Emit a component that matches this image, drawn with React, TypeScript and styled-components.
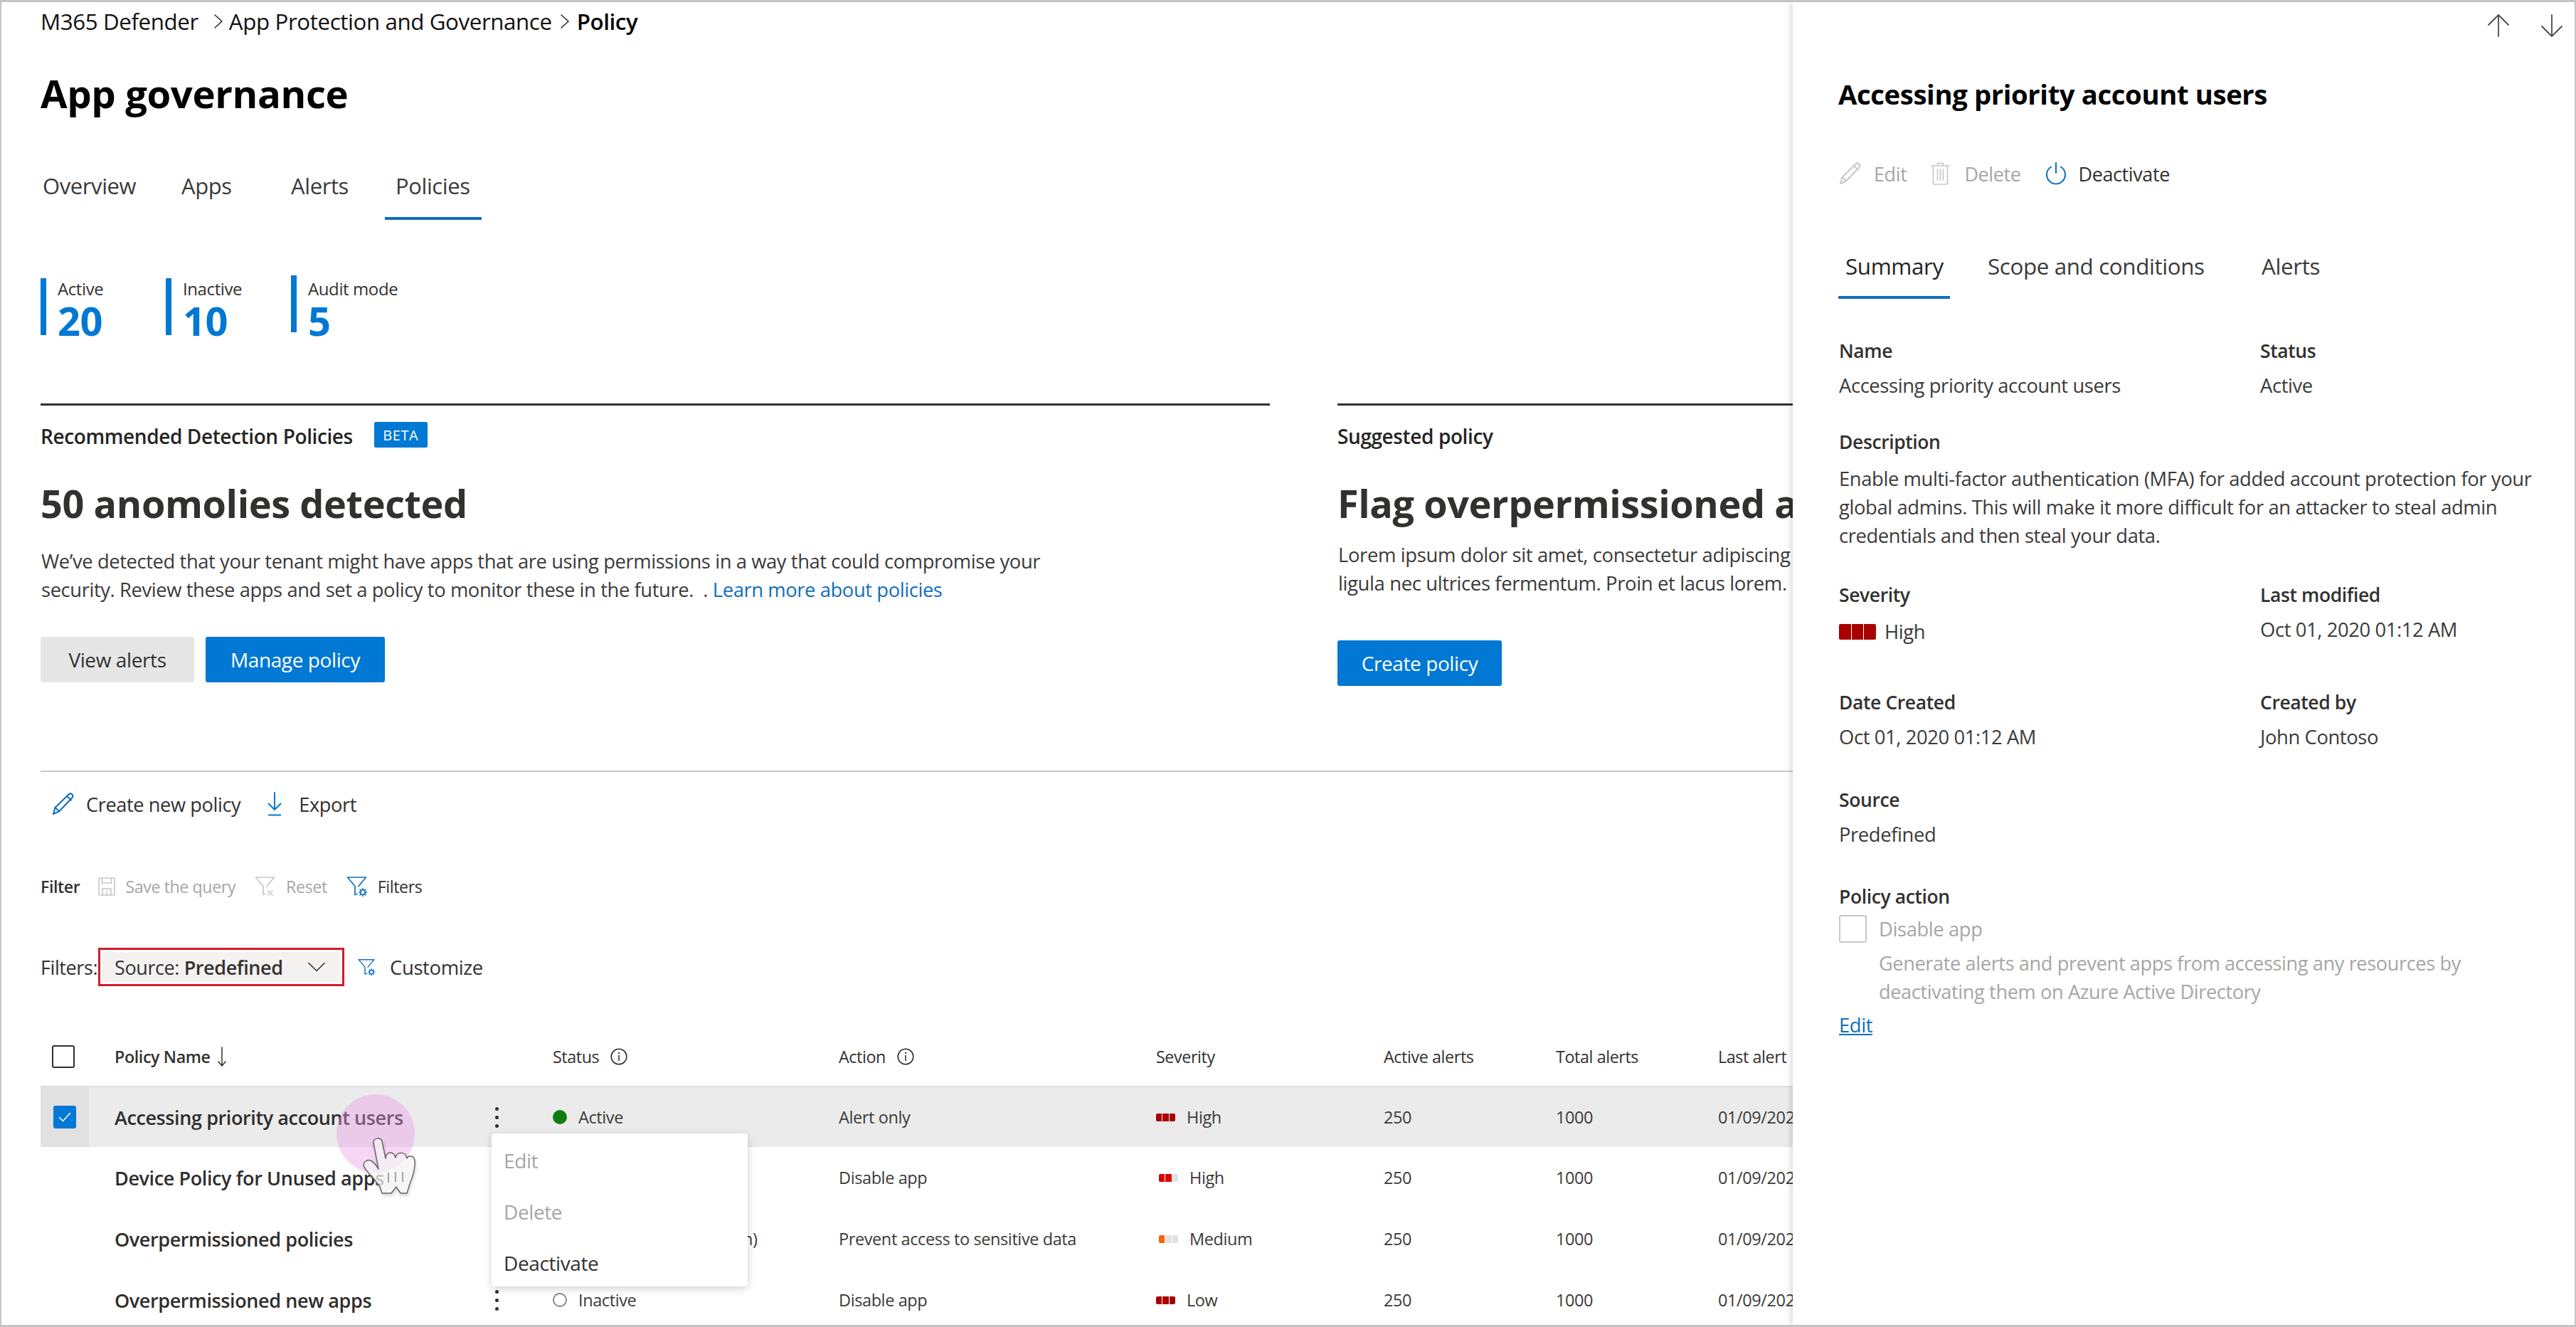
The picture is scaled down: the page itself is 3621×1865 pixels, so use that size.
import React from "react";
import styled, { createGlobalStyle } from "styled-components";

const Global = createGlobalStyle`
  html, body { margin: 0; padding: 0; background: #fff; }
  * { box-sizing: border-box; }
  body { font-family: "Open Sans", "Noto Sans", "Liberation Sans", sans-serif; color: #323130; letter-spacing: -0.025em; }
`;

const BLUE = "#0078d4";

const Frame = styled.div`
  width: 3621px; height: 1865px; display: flex; overflow: hidden; background: #fff;
  border-top: 3px solid #c4c4c4; border-left: 2px solid #c4c4c4; border-right: 2px solid #c4c4c4; border-bottom: 3px solid #c4c4c4;
`;
const Main = styled.main`
  flex: 0 0 2518px; width: 2518px; overflow: hidden; padding-left: 55px; white-space: nowrap;
`;
const Breadcrumb = styled.nav`
  height: 54px; display: flex; align-items: center; font-size: 31.300px; color: #111;
`;
const Crumb = styled.span<{ $bold?: boolean }>`
  font-weight: ${p => (p.$bold ? 600 : 400)};
  color: ${p => (p.$bold ? "#000" : "#111")};
`;
const CrumbSep = styled.svg<{ $near?: boolean }>`
  width: 12px; height: 24px; margin: 0 ${p => (p.$near ? 11 : 9)}px 0 ${p => (p.$near ? 12 : 22)}px; flex: none;
`;
const Title = styled.h1`
  margin: 43px 0 0; height: 62px; line-height: 62px; font-size: 54.500px; font-weight: 700; color: #000;
`;
const Tabs = styled.div`
  margin: 77px 0 0 -12px; display: grid; grid-template-columns: 195px 154px 147px 136px;
`;
const TabItem = styled.div<{ $active?: boolean }>`
  height: 70px; padding: 0 15px; line-height: 44px; font-size: 31px; color: #3b3a39;
  border-bottom: 4px solid ${p => (p.$active ? "#106ebe" : "transparent")};
`;
const Stats = styled.div`
  margin-top: 82px; display: flex; height: 176px;
`;
const Stat = styled.div`
  width: 176px; display: flex; align-items: flex-start; gap: 16px;
`;
const StatBar = styled.div<{ $raised?: boolean }>`
  width: 8px; height: 80px; background: ${BLUE}; margin-top: ${p => (p.$raised ? -4 : 0)}px;
`;
const StatText = styled.div`display: flex; flex-direction: column;`;
const StatLabel = styled.div`
  font-size: 24px; line-height: 30px; color: #323130;
`;
const StatValue = styled.div`
  font-size: 56px; line-height: 58px; font-weight: 700; color: ${BLUE}; letter-spacing: -0.01em;
`;
const Cards = styled.section`
  height: 516px; display: grid; grid-template-columns: 1728px 1000px; column-gap: 95px;
`;
const Card = styled.div`
  border-top: 3px solid #323130;
`;
const CardHead = styled.div`
  margin-top: 23px; height: 36px; display: flex; align-items: center; gap: 30px;
  font-size: 28px; font-weight: 600; color: #252423;
`;
const CardHeadText = styled.span`padding-top: 3px;`;
const Beta = styled.span`
  width: 75px; height: 36px; display: flex; align-items: center; justify-content: center;
  background: ${BLUE}; color: #fff; font-size: 20px; font-weight: 400; letter-spacing: 0.03em; border-radius: 2px;
`;
const CardTitle = styled.h2`
  margin: 46px 0 0; height: 64px; line-height: 64px; font-size: 54px; font-weight: 700; color: #323130;
`;
const CardText = styled.p<{ $tight?: boolean }>`
  margin: ${p => (p.$tight ? 21 : 30)}px 0 0; padding-left: 1px; font-size: ${p => (p.$tight ? 27.500 : 27.350)}px; line-height: 40px; color: #3b3a39;
`;
const TextLink = styled.a`color: #106ebe;`;
const Actions = styled.div<{ $gap: number }>`
  margin-top: ${p => p.$gap}px; display: flex; gap: 16px;
`;
const Btn = styled.div<{ $primary?: boolean; $w: number }>`
  width: ${p => p.$w}px; height: 64px; display: flex; align-items: center; justify-content: center;
  background: ${p => (p.$primary ? BLUE : "#e6e6e6")}; color: ${p => (p.$primary ? "#fff" : "#323130")};
  border-radius: 3px; font-size: 28px;
`;
const Divider = styled.div`height: 2px; background: #c8c8c8;`;
const Toolbar = styled.div`
  height: 90px; display: flex; align-items: center; padding-left: 16px; font-size: 27.200px; color: #323130;
`;
const ToolItem = styled.span<{ $gap?: number; $after?: number }>`
  display: flex; align-items: center; gap: ${p => p.$gap ?? 16}px; margin-right: ${p => p.$after ?? 0}px;
`;
const FilterRow = styled.div`
  margin-top: 46px; height: 50px; display: flex; align-items: center; font-size: 23.200px; color: #323130;
`;
const FilterLabel = styled.span`font-weight: 600; margin-right: 26px;`;
const FilterItem = styled.span<{ $off?: boolean; $after?: number }>`
  display: flex; align-items: center; gap: 14px; margin-right: ${p => p.$after ?? 0}px;
  color: ${p => (p.$off ? "#a6a6a6" : "#323130")};
`;
const ChipRow = styled.div`
  margin-top: 61px; height: 54px; display: flex; align-items: center; font-size: 27px;
`;
const ChipLabel = styled.span`width: 81px;`;
const Chip = styled.div`
  width: 346px; height: 54px; border: 3px solid #d01c2c; padding: 3px; background: #fff;
  margin-right: 19px; display: flex;
`;
const ChipInner = styled.div`
  flex: 1; background: #f3f2f1; display: flex; align-items: center; justify-content: space-between;
  padding: 0 21px 0 17px; font-size: 27px; color: #323130;
`;
const ChipBold = styled.b`font-weight: 600;`;
const Customize = styled.span`
  display: flex; align-items: center; gap: 20px; font-size: 27.500px;
`;
const Table = styled.div`
  margin-top: 57px; position: relative;
`;
const grid = "68px 652px 402px 446px 320px 242px 228px 200px";
const HeadRow = styled.div`
  height: 83px; display: grid; grid-template-columns: ${grid}; align-items: center; font-size: 23.300px; color: #323130;
`;
const HeadCell = styled.div`display: flex; align-items: center; gap: 16px;`;
const NameHead = styled(HeadCell)`padding-left: 36px; font-weight: 600; gap: 10px;`;
const CheckCell = styled.div`display: flex; padding-left: 16px;`;
const Box = styled.div`
  width: 32px; height: 32px; border: 2px solid #323130; border-radius: 3px;
`;
const CheckedBox = styled.div`
  width: 32px; height: 32px; margin-left: 2px; background: ${BLUE}; border-radius: 3px;
  display: flex; align-items: center; justify-content: center;
`;
const Row = styled.div<{ $selected?: boolean }>`
  height: 86px; display: grid; grid-template-columns: ${grid}; align-items: stretch;
  font-size: 23.500px; color: #3b3a39;
  background: ${p => (p.$selected ? "#ebebeb" : "transparent")};
  border-top: ${p => (p.$selected ? "2px solid #dedede" : "none")};
`;
const Cell = styled.div`display: flex; align-items: center; gap: 16px;`;
const SelCell = styled.div<{ $selected?: boolean }>`
  display: flex; align-items: center; padding-left: 16px;
  background: ${p => (p.$selected ? "#e1e1e1" : "transparent")};
`;
const NameCell = styled.div`
  padding-left: 36px; display: flex; align-items: center; justify-content: space-between; padding-right: 76px;
  font-size: 27px; font-weight: 600; color: #2f2e2d;
`;
const More = styled.div`display: flex; flex-direction: column; gap: 7px;`;
const MoreDot = styled.i`display: block; width: 5px; height: 5px; border-radius: 50%; background: #323130;`;
const StatusDot = styled.span<{ $on?: boolean }>`
  width: 20px; height: 20px; border-radius: 50%; flex: none;
  background: ${p => (p.$on ? "#107c10" : "#fff")};
  border: ${p => (p.$on ? "none" : "2px solid #8a8886")};
`;
const Sev = styled.div<{ $big?: boolean; $indent?: number }>`
  display: flex; gap: 1px; margin-left: ${p => p.$indent ?? 0}px;
  width: ${p => (p.$big ? 52 : 27)}px; height: ${p => (p.$big ? 22 : 11)}px; flex: none;
  border-radius: 2px; overflow: hidden;
`;
const SevBar = styled.i<{ $c: string }>`flex: 1; background: ${p => p.$c};`;
const Menu = styled.div`
  position: absolute; left: 634px; top: 150px; width: 360px; height: 215px; background: #fff; border-radius: 4px;
  box-shadow: 0 3px 12px rgba(0,0,0,.18); padding: 2px 17px 0; font-size: 28px; z-index: 2;
`;
const MenuItem = styled.div<{ $off?: boolean }>`
  height: 72px; display: flex; align-items: center; color: ${p => (p.$off ? "#a6a6a6" : "#323130")};
`;
const Halo = styled.div`
  position: absolute; left: 416px; top: 95px; width: 110px; height: 110px; border-radius: 50%;
  background: rgba(236,150,230,.4); z-index: 3;
`;
const Hand = styled.svg`
  position: absolute; left: 453px; top: 155px; width: 76px; height: 82px; z-index: 4;
  filter: drop-shadow(1px 3px 2px rgba(0,0,0,.18));
`;

const Panel = styled.aside`
  flex: 1; position: relative; background: #fff; box-shadow: -3px 0 7px rgba(0,0,0,.14);
  padding-left: 65px; white-space: nowrap; z-index: 5;
`;
const PagerRow = styled.div`
  height: 65px; display: flex; justify-content: flex-end; align-items: center; gap: 45px; padding-right: 17px;
`;
const PanelTitle = styled.h2`
  margin: 39px 0 0 -1px; height: 50px; line-height: 50px; font-size: 38.300px; font-weight: 700; color: #000;
`;
const PanelActions = styled.div`
  margin: 59px 0 0 0; height: 56px; display: flex; align-items: center; font-size: 27px;
`;
const PanelAction = styled.span<{ $off?: boolean; $after?: number; $gap?: number }>`
  display: flex; align-items: center; gap: ${p => p.$gap ?? 17}px; margin-right: ${p => p.$after ?? 0}px;
  color: ${p => (p.$off ? "#a6a6a6" : "#323130")};
`;
const PanelTabs = styled.div`
  margin: 80px 0 0 -1px; display: grid; grid-template-columns: 210px 385px 160px;
`;
const PanelTab = styled.div<{ $active?: boolean }>`
  height: 68px; padding-left: ${p => (p.$active ? 10 : 0)}px; line-height: 44px; font-size: 31.400px;
  color: ${p => (p.$active ? "#252423" : "#3b3a39")}; font-weight: ${p => (p.$active ? 500 : 400)};
  width: ${p => (p.$active ? "157px" : "auto")};
  border-bottom: 4px solid ${p => (p.$active ? "#106ebe" : "transparent")};
`;
const Fields = styled.div`
  display: grid; grid-template-columns: 592px 1fr; margin-top: 56px;
`;
const Field = styled.div<{ $h: number; $wide?: boolean }>`
  height: ${p => p.$h}px; ${p => (p.$wide ? "grid-column: 1 / -1;" : "")}
`;
const Label = styled.div`
  font-size: 26.500px; line-height: 34px; font-weight: 600; color: #323130;
`;
const Value = styled.div<{ $top?: number }>`
  margin-top: ${p => p.$top ?? 15}px; font-size: 27.400px; line-height: 34px; color: #3b3a39;
`;
const Desc = styled.div`
  margin-top: 15px; font-size: 27.400px; line-height: 40px; color: #3b3a39;
`;
const SevValue = styled.div`
  margin-top: 18px; display: flex; align-items: center; gap: 12px; font-size: 27.400px; line-height: 34px; color: #3b3a39;
`;
const PolicyCheck = styled.div`
  margin-top: 8px; display: flex; gap: 17px; align-items: center; font-size: 27.400px; color: #a6a6a6; height: 40px;
`;
const PolicyBox = styled.div`
  width: 39px; height: 39px; border: 2px solid #c8c8c8; border-radius: 3px; flex: none;
`;
const PolicyNote = styled.div`
  margin: 9px 0 0 56px; font-size: 27.200px; line-height: 40px; color: #a6a6a6;
`;
const PolicyEdit = styled.a`
  display: block; margin-top: 9px; height: 38px; line-height: 36px; font-size: 27.400px; color: #106ebe; text-decoration: underline;
`;

const line = { fill: "none", strokeLinecap: "round", strokeLinejoin: "round" } as const;

const Pencil = ({ c, w = 32, h = 32 }: { c: string; w?: number; h?: number }) => (
  <svg width={w} height={h} viewBox="0 0 32 32" {...line} stroke={c} strokeWidth="2" style={{ flex: "none" }}>
    <path d="M2 30l2.500-9L23.500 2.500c1.500-1.300 3.500-1.300 4.800 0s1.300 3.300 0 4.700L10.500 26z" />
    <path d="M4.500 21l6 5M21 5l6 5.500" />
  </svg>
);
const ExportIcon = () => (
  <svg width="20" height="34" viewBox="0 0 20 34" {...line} stroke={BLUE} strokeWidth="2" style={{ flex: "none" }}>
    <path d="M10 1v24M1.500 16.500L10 25l8.500-8.500" />
    <path d="M1 32.500h18" strokeLinecap="butt" />
  </svg>
);
const Funnel = ({ c, gear, x, size = 30 }: { c: string; gear?: boolean; x?: boolean; size?: number }) => (
  <svg width={size} height={size} viewBox="0 0 30 30" {...line} stroke={c} strokeWidth="1.700" style={{ flex: "none" }}>
    <path d="M1.500 2h26L17 14.500M1.500 2L12 14.500V26.500l3-1" />
    {gear && (
      <g strokeWidth="1.600">
        <circle cx="23" cy="23" r="3.200" />
        <path d="M23 17.500v2M23 26.500v2M17.500 23h2M26.500 23h2M19.100 19.100l1.400 1.400M25.500 25.500l1.400 1.400M19.100 26.900l1.400-1.400M25.500 20.500l1.400-1.400" />
      </g>
    )}
    {x && <path d="M19 21l6 6M25 21l-6 6" />}
  </svg>
);
const SaveIcon = () => (
  <svg width="24" height="26" viewBox="0 0 24 26" {...line} stroke="#c8c8c8" strokeWidth="1.700" style={{ flex: "none" }}>
    <path d="M1 2.500c0-.8.7-1.500 1.500-1.500h19c.8 0 1.500.7 1.500 1.500v21c0 .8-.7 1.500-1.500 1.500h-19c-.8 0-1.500-.7-1.500-1.500z" />
    <path d="M5.500 1v7h13V1M6 25v-9h12v9M12 20v5" />
  </svg>
);
const Trash = () => (
  <svg width="27" height="32" viewBox="0 0 27 32" {...line} stroke="#c8c8c8" strokeWidth="1.700" style={{ flex: "none" }}>
    <path d="M1 5h25M9.500 5V1.500h8V5M3.500 5v24.500c0 .8.700 1.500 1.500 1.500h17c.8 0 1.500-.7 1.500-1.500V5" />
    <path d="M9.500 10v15M13.500 10v15M17.500 10v15" />
  </svg>
);
const Power = () => (
  <svg width="30" height="32" viewBox="0 0 30 32" {...line} stroke="#106ebe" strokeWidth="2" style={{ flex: "none" }}>
    <path d="M15 1v14" />
    <path d="M8 6.500a13 13 0 1 0 14 0" />
  </svg>
);
const Info = () => (
  <svg width="24" height="24" viewBox="0 0 24 24" {...line} stroke="#323130" strokeWidth="1.600" style={{ flex: "none" }}>
    <circle cx="12" cy="12" r="10.800" />
    <path d="M12 10.500v7" />
    <path d="M12 6.800v.4" strokeWidth="2" />
  </svg>
);
const Chevron = () => (
  <svg width="24" height="14" viewBox="0 0 24 14" {...line} stroke="#323130" strokeWidth="1.600">
    <path d="M1 1.500l11 11 11-11" />
  </svg>
);
const Arrow = ({ dir }: { dir: "up" | "down" }) => (
  <svg width="30" height="32" viewBox="0 0 30 32" {...line} stroke="#4a4a4a" strokeWidth="1.800" style={{ flex: "none" }}>
    {dir === "up" ? <path d="M15 31V1M1 15L15 1l14 14" /> : <path d="M15 1v30M1 17l14 14 14-14" />}
  </svg>
);

const sevColors = {
  full: ["#a80000", "#a80000", "#a80000"],
  high: ["#d80000", "#d80000", "#e1e1e1"],
  med: ["#f7630c", "#e1e1e1", "#e1e1e1"],
};

const rows = [
  { name: "Accessing priority account users", status: "Active", on: true, action: "Alert only", sev: "High", bars: sevColors.full, indent: 0, selected: true },
  { name: "Device Policy for Unused apps", status: "Active", on: true, action: "Disable app", sev: "High", bars: sevColors.high, indent: 4 },
  { name: "Overpermissioned policies", status: "Active (Audit mode - on)", on: true, action: "Prevent access to sensitive data", sev: "Medium", bars: sevColors.med, indent: 4 },
  { name: "Overpermissioned new apps", status: "Inactive", on: false, action: "Disable app", sev: "Low", bars: sevColors.full, indent: 0 },
];

export default function App() {
  return (
    <Frame>
      <Global />
      <Main>
        <Breadcrumb>
          <Crumb>M365 Defender</Crumb>
          <CrumbSep viewBox="0 0 12 24" {...line} stroke="#222" strokeWidth="1.500"><path d="M1 3l10 9-10 9" /></CrumbSep>
          <Crumb>App Protection and Governance</Crumb>
          <CrumbSep $near viewBox="0 0 12 24" {...line} stroke="#222" strokeWidth="1.500"><path d="M1 3l10 9-10 9" /></CrumbSep>
          <Crumb $bold>Policy</Crumb>
        </Breadcrumb>
        <Title>App governance</Title>
        <Tabs>
          <TabItem>Overview</TabItem>
          <TabItem>Apps</TabItem>
          <TabItem>Alerts</TabItem>
          <TabItem $active>Policies</TabItem>
        </Tabs>
        <Stats>
          <Stat><StatBar /><StatText><StatLabel>Active</StatLabel><StatValue>20</StatValue></StatText></Stat>
          <Stat><StatBar /><StatText><StatLabel>Inactive</StatLabel><StatValue>10</StatValue></StatText></Stat>
          <Stat><StatBar $raised /><StatText><StatLabel>Audit mode</StatLabel><StatValue>5</StatValue></StatText></Stat>
        </Stats>
        <Cards>
          <Card>
            <CardHead><CardHeadText>Recommended Detection Policies</CardHeadText><Beta>BETA</Beta></CardHead>
            <CardTitle>50 anomolies detected</CardTitle>
            <CardText>
              We’ve detected that your tenant might have apps that are using permissions in a way that could compromise your<br />
              security. Review these apps and set a policy to monitor these in the future.&nbsp; . <TextLink>Learn more about policies</TextLink>
            </CardText>
            <Actions $gap={46}>
              <Btn $w={216}>View alerts</Btn>
              <Btn $w={252} $primary>Manage policy</Btn>
            </Actions>
          </Card>
          <Card>
            <CardHead><CardHeadText>Suggested policy</CardHeadText></CardHead>
            <CardTitle>Flag overpermissioned apps</CardTitle>
            <CardText $tight>
              Lorem ipsum dolor sit amet, consectetur adipiscing elit, sed do eiusmod<br />
              ligula nec ultrices fermentum. Proin et lacus lorem.
            </CardText>
            <Actions $gap={60}>
              <Btn $w={231} $primary>Create policy</Btn>
            </Actions>
          </Card>
        </Cards>
        <Divider />
        <Toolbar>
          <ToolItem $after={38}><Pencil c="#106ebe" />Create new policy</ToolItem>
          <ToolItem $gap={24}><ExportIcon />Export</ToolItem>
        </Toolbar>
        <FilterRow>
          <FilterLabel>Filter</FilterLabel>
          <FilterItem $off $after={27}><SaveIcon />Save the query</FilterItem>
          <FilterItem $off $after={27}><Funnel c="#c8c8c8" x />Reset</FilterItem>
          <FilterItem><Funnel c="#106ebe" gear />Filters</FilterItem>
        </FilterRow>
        <ChipRow>
          <ChipLabel>Filters:</ChipLabel>
          <Chip>
            <ChipInner>
              <span>Source: <ChipBold>Predefined</ChipBold></span>
              <Chevron />
            </ChipInner>
          </Chip>
          <Customize><Funnel c="#106ebe" gear size={25} />Customize</Customize>
        </ChipRow>
        <Table>
          <HeadRow>
            <CheckCell><Box /></CheckCell>
            <NameHead>
              Policy Name
              <svg width="12" height="28" viewBox="0 0 12 28" {...line} stroke="#323130" strokeWidth="1.500"><path d="M6 1v26M1 21l5 6 5-6" /></svg>
            </NameHead>
            <HeadCell>Status <Info /></HeadCell>
            <HeadCell>Action <Info /></HeadCell>
            <HeadCell>Severity</HeadCell>
            <HeadCell>Active alerts</HeadCell>
            <HeadCell>Total alerts</HeadCell>
            <HeadCell>Last alert</HeadCell>
          </HeadRow>
          {rows.map(r => (
            <Row key={r.name} $selected={r.selected}>
              <SelCell $selected={r.selected}>
                {r.selected && (
                  <CheckedBox>
                    <svg width="18" height="14" viewBox="0 0 18 14" {...line} stroke="#fff" strokeWidth="1.600"><path d="M1.500 7.500l5 5L16.500 1.500" /></svg>
                  </CheckedBox>
                )}
              </SelCell>
              <NameCell>
                {r.name}
                <More><MoreDot /><MoreDot /><MoreDot /></More>
              </NameCell>
              <Cell><StatusDot $on={r.on} />{r.status}</Cell>
              <Cell>{r.action}</Cell>
              <Cell>
                <Sev $indent={r.indent}>{r.bars.map((c, i) => <SevBar key={i} $c={c} />)}</Sev>
                {r.sev}
              </Cell>
              <Cell>250</Cell>
              <Cell>1000</Cell>
              <Cell>01/09/2020</Cell>
            </Row>
          ))}
          <Menu>
            <MenuItem $off>Edit</MenuItem>
            <MenuItem $off>Delete</MenuItem>
            <MenuItem>Deactivate</MenuItem>
          </Menu>
          <Halo />
          <Hand viewBox="0 0 76 82">
            <path
              d="M15 8C14 1 25 0 27 6L32 30C33 20 43 19 46 29C48 20 60 20 62 30C64 25 72 26 73 33C74 45 70 55 66 66L62 79H53L47 70L40 79H27L24 70C18 60 6 50 2 42C-1 36 6 31 11 33C15 35 19 40 22 45Z"
              fill="#fff" fillOpacity=".72" stroke="#666" strokeWidth="1.500" strokeLinejoin="round"
            />
            <path d="M36 50v14M46 49v14M56 49v14" stroke="#8a8a8a" strokeWidth="1.500" fill="none" />
          </Hand>
        </Table>
      </Main>
      <Panel>
        <PagerRow><Arrow dir="up" /><Arrow dir="down" /></PagerRow>
        <PanelTitle>Accessing priority account users</PanelTitle>
        <PanelActions>
          <PanelAction $off $after={34}><Pencil c="#c8c8c8" />Edit</PanelAction>
          <PanelAction $off $after={34} $gap={20}><Trash />Delete</PanelAction>
          <PanelAction><Power />Deactivate</PanelAction>
        </PanelActions>
        <PanelTabs>
          <PanelTab $active>Summary</PanelTab>
          <PanelTab>Scope and conditions</PanelTab>
          <PanelTab>Alerts</PanelTab>
        </PanelTabs>
        <Fields>
          <Field $h={128}><Label>Name</Label><Value>Accessing priority account users</Value></Field>
          <Field $h={128}><Label>Status</Label><Value>Active</Value></Field>
          <Field $h={215} $wide>
            <Label>Description</Label>
            <Desc>
              Enable multi-factor authentication (MFA) for added account protection for your<br />
              global admins. This will make it more difficult for an attacker to steal admin<br />
              credentials and then steal your data.
            </Desc>
          </Field>
          <Field $h={151}>
            <Label>Severity</Label>
            <SevValue><Sev $big>{sevColors.full.map((c, i) => <SevBar key={i} $c={c} />)}</Sev>High</SevValue>
          </Field>
          <Field $h={151}><Label>Last modified</Label><Value>Oct 01, 2020 01:12 AM</Value></Field>
          <Field $h={137}><Label>Date Created</Label><Value>Oct 01, 2020 01:12 AM</Value></Field>
          <Field $h={137}><Label>Created by</Label><Value>John Contoso</Value></Field>
          <Field $h={136} $wide><Label>Source</Label><Value>Predefined</Value></Field>
          <Field $h={210} $wide>
            <Label>Policy action</Label>
            <PolicyCheck><PolicyBox />Disable app</PolicyCheck>
            <PolicyNote>
              Generate alerts and prevent apps from accessing any resources by<br />
              deactivating them on Azure Active Directory
            </PolicyNote>
            <PolicyEdit>Edit</PolicyEdit>
          </Field>
        </Fields>
      </Panel>
    </Frame>
  );
}
